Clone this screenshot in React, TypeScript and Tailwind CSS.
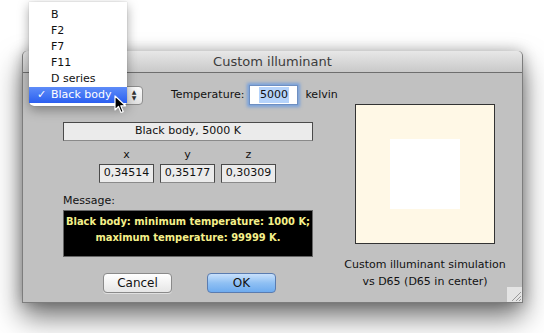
import React from 'react'

const font = { fontFamily: '"Lucida Grande", "DejaVu Sans", sans-serif' }

const menuItems = ['B', 'F2', 'F7', 'F11', 'D series', 'Black body']

// small bordered read-only field
function Field({ children, className = '' }: { children: React.ReactNode; className?: string }) {
  return (
    <div
      className={
        'flex items-center justify-center border border-[#4a4a4a] border-b-[#8a8a8a] bg-[#ebebeb] text-[11px] text-[#111] ' +
        className
      }
    >
      {children}
    </div>
  )
}

function PopupMenu() {
  return (
    <div className="absolute left-[29px] top-[2px] w-[98px] rounded-b-[5px] bg-white pt-[5px] pb-[3px] shadow-[0_4px_12px_rgba(0,0,0,0.35),0_0_1px_rgba(0,0,0,0.4)]">
      {menuItems.map((item) => {
        const selected = item === 'Black body'
        return (
          <div
            key={item}
            className={
              'flex h-[16px] items-center text-[11px] ' +
              (selected
                ? 'bg-gradient-to-b from-[#5e8cf8] to-[#2b5ef0] text-white'
                : 'text-[#111]')
            }
          >
            <span className="w-[22px] pl-[8px] text-[11px]">{selected ? '✓' : ''}</span>
            <span>{item}</span>
          </div>
        )
      })}
    </div>
  )
}

function Cursor() {
  return (
    <svg className="absolute left-[114px] top-[95px]" width="14" height="20" viewBox="0 0 14 20">
      <path
        d="M1 1 L1 15 L4.5 11.5 L7 17.5 L9.2 16.6 L6.8 10.8 L11.5 10.8 Z"
        fill="#000"
        stroke="#fff"
        strokeWidth="1.2"
        strokeLinejoin="round"
      />
    </svg>
  )
}

function App() {
  return (
    <div className="relative h-[333px] w-[544px] overflow-hidden bg-white" style={font}>
      {/* dialog window */}
      <div className="absolute left-[22px] top-[51px] flex h-[252px] w-[501px] flex-col rounded-t-[5px] border-x border-b border-[#7d7d7d] bg-[#c1c1c1] shadow-[0_14px_28px_rgba(0,0,0,0.55),0_0_14px_rgba(0,0,0,0.25)]">
        <div className="flex h-[22px] shrink-0 items-center justify-center rounded-t-[5px] border-b border-[#6e6e6e] bg-gradient-to-b from-[#e8e8e8] to-[#c9c9c9] text-[13px] text-[#3c3c3c]">
          Custom illuminant
        </div>

        <div className="relative flex flex-1">
          {/* left column */}
          <div className="ml-[40px] flex w-[250px] shrink-0 flex-col">
            <div className="mt-[11px] flex h-[22px] items-center whitespace-nowrap">
              <div className="flex h-[19px] w-[80px] shrink-0 items-center justify-end rounded-[4px] border border-[#8e8e8e] bg-gradient-to-b from-[#fdfdfd] to-[#e3e3e3]">
                <div className="flex h-full w-[16px] flex-col items-center justify-center text-[6px] leading-[6px] text-[#333]">
                  <span>▲</span>
                  <span>▼</span>
                </div>
              </div>
              <span className="ml-[28px] shrink-0 text-[11px] text-[#111]">Temperature:</span>
              <div className="ml-[5px] flex h-[20px] w-[49px] shrink-0 items-center justify-center border border-[#6f8fc0] bg-white shadow-[0_0_3px_2px_rgba(94,150,230,0.75)]">
                <span className="bg-[#b5d3fb] px-[1px] text-[11px] text-[#111]">5000</span>
              </div>
              <span className="ml-[7px] shrink-0 text-[11px] text-[#111]">kelvin</span>
            </div>

            <Field className="mt-[16px] h-[19px] w-[250px]">Black body, 5000 K</Field>

            <div className="mt-[6px] flex gap-[6px] pl-[36px]">
              {[
                ['x', '0,34514'],
                ['y', '0,35177'],
                ['z', '0,30309'],
              ].map(([label, value]) => (
                <div key={label} className="flex flex-col items-center">
                  <span className="h-[16px] text-[11px] leading-[16px] text-[#111]">{label}</span>
                  <Field className="mt-[1px] h-[19px] w-[55px]">{value}</Field>
                </div>
              ))}
            </div>

            <span className="mt-[11px] text-[11px] leading-[14px] text-[#111]">Message:</span>
            <div
              className="mt-[2px] flex h-[47px] w-[250px] flex-col items-center whitespace-nowrap border border-[#666] bg-black pt-[3px] text-[11px] font-bold leading-[16px] text-[#f5f08a]"
              style={{ fontFamily: '"DejaVu Sans Condensed", "Liberation Sans", sans-serif' }}
            >
              <span>Black body: minimum temperature: 1000 K;</span>
              <span>maximum temperature: 99999 K.</span>
            </div>

            <div className="mt-[16px] flex gap-[35px] pl-[40px]">
              <button className="h-[20px] w-[69px] rounded-[4px] border border-[#8a8a8a] bg-gradient-to-b from-white to-[#e6e6e6] text-[12px] text-[#111] shadow-[0_1px_0_rgba(255,255,255,0.5)]">
                Cancel
              </button>
              <button className="h-[20px] w-[69px] rounded-[4px] border border-[#5a7cb0] bg-gradient-to-b from-[#c8e0fb] via-[#8fc0f3] to-[#6eabef] text-[12px] text-[#111]">
                OK
              </button>
            </div>
          </div>

          {/* right column */}
          <div className="ml-[42px] flex w-[140px] shrink-0 flex-col items-center">
            <div className="mt-[31px] flex h-[140px] w-[140px] shrink-0 items-center justify-center border border-[#333] bg-[#fff8e6]">
              <div className="h-[70px] w-[70px] bg-white" />
            </div>
            <div className="mt-[12px] flex w-[180px] flex-col items-center whitespace-nowrap text-[11px] leading-[17px] text-[#111]">
              <span>Custom illuminant simulation</span>
              <span>vs D65 (D65 in center)</span>
            </div>
          </div>

          {/* resize grip */}
          <svg className="absolute bottom-0 right-0" width="15" height="15" viewBox="0 0 15 15">
            <rect x="0" y="0" width="15" height="15" fill="#e4e4e4" />
            <path d="M14 5 L5 14 M14 9 L9 14 M14 12 L12 14" stroke="#9a9a9a" strokeWidth="1" />
          </svg>
        </div>
      </div>

      <PopupMenu />
      <Cursor />
    </div>
  )
}

export default App
